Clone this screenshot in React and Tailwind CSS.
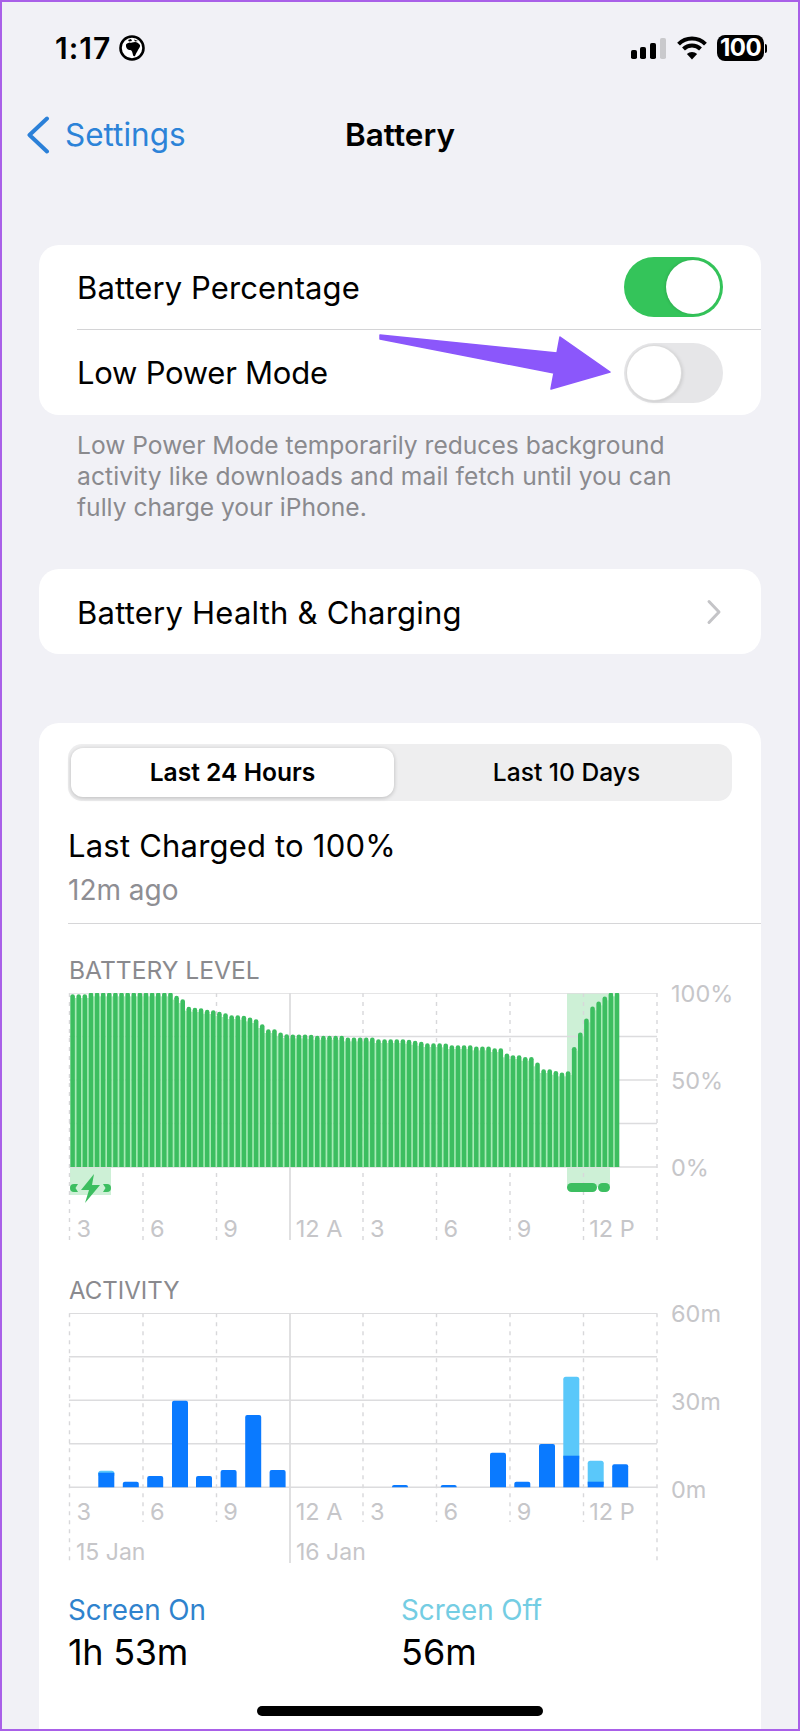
import React from "react";

const LEVEL_TOPS = [135,135,135,130,130,130,130,130,130,130,130,130,130,130,130,130,130,140,150,173,176,177,182,183,188,192,198,198,200,205,210,225,240,240,250,255,256,256,256,257,260,260,260,260,260,265,265,265,265,265,270,270,270,270,270,272,275,278,282,282,282,283,288,288,288,288,292,292,292,297,297,313,318,318,323,323,340,360,360,365,370,366,293,250,208,172,157,142,130,130];

const ACT = [
  { x: 98.3, dark: 1472.7, light: 1470.7 },
  { x: 122.8, dark: 1481.7 },
  { x: 147.2, dark: 1476 },
  { x: 172, dark: 1400.7 },
  { x: 196, dark: 1476 },
  { x: 220.6, dark: 1470 },
  { x: 245.2, dark: 1415 },
  { x: 269.6, dark: 1470 },
  { x: 392, dark: 1485 },
  { x: 440.7, dark: 1485 },
  { x: 490, dark: 1452.7 },
  { x: 514.3, dark: 1481.7 },
  { x: 539, dark: 1444 },
  { x: 563.3, dark: 1455.7, light: 1376.7 },
  { x: 587.7, dark: 1481.7, light: 1460.7 },
  { x: 612.2, dark: 1464.3 },
];

const VX = [69.5, 143, 216.5, 363, 436.5, 510, 583.5, 657];

function GridLines({ top, bottom, minorEnd, longEnd }) {
  const step = (bottom - top) / 4;
  return (
    <g>
      {VX.map((x) => (
        <line key={x} x1={x} x2={x} y1={top} y2={x === 69.5 || x === 657 ? longEnd : minorEnd} stroke="#d8d8da" strokeWidth="1.4" strokeDasharray="4 5" />
      ))}
      <line x1="290" x2="290" y1={top} y2={longEnd} stroke="#d3d3d5" strokeWidth="1.4" />
      {[0, 1, 2, 3, 4].map((i) => (
        <line key={i} x1="69" x2="657" y1={top + step * i} y2={top + step * i} stroke="#dcdcde" strokeWidth="1.4" />
      ))}
    </g>
  );
}

function Toggle({ on }) {
  return (
    <div className={`flex h-[60px] w-[99px] rounded-full p-[3px] ${on ? "justify-end bg-[#34c45a]" : "justify-start bg-[#e6e6e8]"}`}>
      <div className={`h-[54px] w-[54px] rounded-full bg-white ${on ? "shadow-[-1px_0_3px_rgba(0,0,0,0.12)]" : "shadow-[0_0_0_1px_#dcdcdc,1px_1px_4px_rgba(0,0,0,0.18)]"}`} />
    </div>
  );
}

function XLabels() {
  const labels = ["3", "6", "9", "12 A", "3", "6", "9", "12 P"];
  return (
    <div className="ml-[1.5px] flex h-[28px] text-[23.5px] leading-[28px] text-[#c6c6c9]">
      {labels.map((l, i) => (
        <div key={i} className={`w-[73.4px] shrink-0 ${i === 3 || i === 7 ? "pl-[6px]" : "pl-[7px]"}`}>{l}</div>
      ))}
    </div>
  );
}

function YLabels({ items, h }) {
  return (
    <div className={`-mt-[13px] ml-[603px] flex flex-col justify-between text-[23.5px] leading-[28px] text-[#c6c6c9] ${h}`}>
      {items.map((t) => (
        <div key={t}>{t}</div>
      ))}
    </div>
  );
}

export default function App() {
  return (
    <div className="relative box-border flex h-[1731px] w-[800px] flex-col overflow-hidden border-2 border-[#a960e8] bg-[#f1f1f6] font-['Inter','Liberation_Sans',sans-serif] text-black">
      {/* status bar */}
      <div className="flex h-[92px] shrink-0 items-center pl-[53px] pr-[31px]">
        <span className="text-[30px] font-semibold leading-none tracking-[1px]">1:17</span>
        <svg className="ml-[8px]" width="26" height="26" viewBox="0 0 26 26">
          <circle cx="13" cy="13" r="11.5" fill="#fff" stroke="#000" strokeWidth="2.6" />
          <path d="M7 9.5 C9 7 11 8 13 7.5 C15 7 17 6.5 19 8 L21 10 C21.5 12 20 13 19 15 C18 17 17 18.5 16 21 C14.5 22 14 20.5 13.5 18 C13 15.5 12 15 10 15 C8 14.5 6.5 12 7 9.5 Z" fill="#000" />
          <path d="M9 5 L12 4 L13 6 L10 6.5 Z M15 4.5 L19 6 L16 6.5 Z" fill="#000" />
        </svg>
        <div className="ml-auto flex items-center">
          <svg width="36" height="22" viewBox="0 0 36 22" className="mt-[1px]">
            <rect x="0" y="12" width="6" height="9" rx="1.8" fill="#000" />
            <rect x="9" y="9" width="6" height="12" rx="1.8" fill="#000" />
            <rect x="19" y="5" width="6" height="16" rx="1.8" fill="#000" />
            <rect x="29" y="0" width="6" height="21" rx="1.8" fill="#c9c9cc" />
          </svg>
          <svg width="32" height="24" viewBox="0 0 32 24" className="ml-[9px]">
            <path d="M2.56 8.1 A19 19 0 0 1 29.44 8.1" fill="none" stroke="#000" strokeWidth="4" />
            <path d="M7.5 13 A12 12 0 0 1 24.5 13" fill="none" stroke="#000" strokeWidth="4" />
            <path d="M16 23.5 L10.9 18 A7.2 7.2 0 0 1 21.1 18 Z" fill="#000" />
          </svg>
          <div className="ml-[9px] flex h-[26px] w-[47px] items-center justify-center rounded-[8px] bg-black text-[24px] font-bold leading-none tracking-[-0.5px] text-white">100</div>
          <div className="ml-[1px] h-[9px] w-[2px] rounded-r-full bg-black" />
        </div>
      </div>

      {/* nav */}
      <div className="grid h-[82px] shrink-0 grid-cols-[1fr_auto_1fr] items-center">
        <div className="flex items-center pl-[24px]">
          <svg width="24" height="38" viewBox="0 0 24 38">
            <path d="M21 2.5 L3.5 19 L21 35.5" fill="none" stroke="#2b80d8" strokeWidth="4" strokeLinecap="round" strokeLinejoin="round" />
          </svg>
          <span className="ml-[15px] text-[31.5px] leading-none text-[#2c83d8]">Settings</span>
        </div>
        <span className="text-[31.5px] font-semibold leading-none">Battery</span>
        <div />
      </div>

      {/* toggles card */}
      <div className="mx-[37px] mt-[69px] shrink-0 rounded-[20px] bg-white text-[31px]">
        <div className="ml-[38px] flex h-[85px] items-center justify-between border-b border-[#d4d4d6] pr-[38px]">
          <span className="mt-[2px] tracking-[0.1px]">Battery Percentage</span>
          <Toggle on />
        </div>
        <div className="ml-[38px] flex h-[85px] items-center justify-between pr-[38px]">
          <span className="mt-[2px] tracking-[-0.25px]">Low Power Mode</span>
          <Toggle />
        </div>
      </div>

      <p className="ml-[75px] mt-[15px] h-[93px] w-[680px] shrink-0 text-[24.6px] leading-[31px] text-[#8a8a8e]">
        Low Power Mode temporarily reduces background
        <br />
        <span className="tracking-[0.1px]">activity like downloads and mail fetch until you can</span>
        <br />
        fully charge your iPhone.
      </p>

      {/* health card */}
      <div className="mx-[37px] mt-[46px] flex h-[85px] shrink-0 items-center justify-between rounded-[20px] bg-white pl-[38px] pr-[39px] text-[31px]">
        <span className="mt-[3px] tracking-[0.22px]">Battery Health &amp; Charging</span>
        <svg width="16" height="26" viewBox="0 0 16 26">
          <path d="M3 2.5 L13 13 L3 23.5" fill="none" stroke="#c4c4c7" strokeWidth="3" strokeLinecap="round" strokeLinejoin="round" />
        </svg>
      </div>

      {/* usage card */}
      <div className="mx-[37px] mt-[69px] flex-1 rounded-t-[20px] bg-white pl-[29px] pt-[21px]">
        <div className="flex h-[57px] w-[664px] items-center rounded-[14px] bg-[#eeeeef] px-[3px]">
          <div className="flex h-[49px] w-[323px] items-center justify-center rounded-[12px] bg-white text-[24.6px] font-semibold shadow-[0_1px_4px_rgba(0,0,0,0.22)]">Last 24 Hours</div>
          <div className="flex flex-1 items-center justify-center pl-[10px] text-[24.6px] font-medium">Last 10 Days</div>
        </div>
        <div className="mt-[25px] h-[39px] text-[31px] leading-[40px] tracking-[0.2px]">Last Charged to 100%</div>
        <div className="mt-[5px] h-[40px] text-[28px] leading-[40px] text-[#8e8e93]">12m ago</div>
        <div className="mt-[13px] h-px bg-[#d6d6d8]" />

        <div className="ml-[1px] mt-[31px] h-[29px] text-[24.6px] leading-[30px] text-[#8a8a8e]">BATTERY LEVEL</div>
        <div className="relative mt-[9px] h-[250px]">
          <svg className="absolute left-0 top-0" width="693" height="250" viewBox="68 993 693 250">
            <rect x="70" y="1167" width="41" height="28" fill="#cdf0d6" />
            <rect x="567" y="993" width="43" height="194" fill="#cdf0d6" />
            <GridLines top={993} bottom={1167} minorEnd={1240} longEnd={1240} />
            {LEVEL_TOPS.slice(0, -1).map((t, i) => {
              const lower = Math.max(t, LEVEL_TOPS[i + 1]);
              const y = 950 + lower / 3 + 3;
              return <rect key={i} x={70.3 + 6.117 * i + 4.4} y={y} width={1.9} height={1167 - y} fill="#a6ecb5" />;
            })}
            {LEVEL_TOPS.map((t, i) => {
              const y = 950 + t / 3;
              return <path key={i} d={`M${70.3 + 6.117 * i} 1167 V${y + 1.5} a2.3 2.3 0 0 1 4.6 0 V1167 Z`} fill="#3cbe60" />;
            })}
            <rect x="567" y="1183" width="30" height="9" rx="4.5" fill="#3cbe60" />
            <rect x="598" y="1183" width="12" height="9" rx="4.5" fill="#3cbe60" />
            <path d="M70 1188 a4 4 0 0 1 4 -4 h4 l-2.5 4 l2.5 4 h-4 a4 4 0 0 1 -4 -4 Z" fill="#3cbe60" />
            <path d="M111 1188 a4 4 0 0 0 -4 -4 h-4 l2.5 4 l-2.5 4 h4 a4 4 0 0 0 4 -4 Z" fill="#3cbe60" />
            <path d="M94 1174 L81 1190 H89 L85 1203 L100 1185 H92 Z" fill="#3cbe60" />
          </svg>
          <div className="relative flex flex-col">
            <YLabels items={["100%", "50%", "0%"]} h="h-[202px]" />
            <div className="mt-[33px]">
              <XLabels />
            </div>
          </div>
        </div>

        <div className="ml-[1px] mt-[33px] h-[29px] text-[24px] leading-[30px] text-[#8a8a8e]">ACTIVITY</div>
        <div className="relative mt-[8px] h-[253px]">
          <svg className="absolute left-0 top-0" width="693" height="253" viewBox="68 1313 693 253">
            <GridLines top={1313.3} bottom={1487.3} minorEnd={1522} longEnd={1563} />
            {ACT.map((b) => (
              <g key={b.x}>
                {b.light && <path d={`M${b.x} ${b.dark + 3} V${b.light + 2.5} a2.5 2.5 0 0 1 2.5 -2.5 h11 a2.5 2.5 0 0 1 2.5 2.5 V${b.dark + 3} Z`} fill="#5ac8fa" />}
                <path d={b.light ? `M${b.x} 1487.3 V${b.dark} h16 V1487.3 Z` : `M${b.x} 1487.3 V${b.dark + 2} a2 2 0 0 1 2 -2 h12 a2 2 0 0 1 2 2 V1487.3 Z`} fill="#0a7aff" />
              </g>
            ))}
          </svg>
          <div className="relative flex flex-col">
            <YLabels items={["60m", "30m", "0m"]} h="h-[204px]" />
            <div className="mt-[-6px]">
              <XLabels />
            </div>
            <div className="ml-[8px] mt-[12px] flex h-[28px] text-[23px] leading-[28px] text-[#c6c6c9]">
              <div className="w-[220px]">15 Jan</div>
              <div>16 Jan</div>
            </div>
          </div>
        </div>

        <div className="mt-[26px] flex">
          <div className="w-[333px]">
            <div className="h-[36px] text-[27.8px] leading-[36px] text-[#2f83cd]">Screen On</div>
            <div className="mt-[4px] h-[40px] text-[36px] leading-[40px] tracking-[-0.3px]">1h 53m</div>
          </div>
          <div>
            <div className="h-[36px] text-[27.8px] leading-[36px] text-[#74cde3]">Screen Off</div>
            <div className="mt-[4px] h-[40px] text-[36px] leading-[40px]">56m</div>
          </div>
        </div>
      </div>

      {/* arrow overlay */}
      <svg className="absolute left-[376px] top-[331px]" width="240" height="62" viewBox="378 333 240 62">
        <path d="M380 335 L557 353 L560 337 L610 372 L551 389 L554 373 L380 339 Z" fill="#8b57fb" stroke="#8b57fb" strokeWidth="1.5" strokeLinejoin="round" />
      </svg>

      {/* home indicator */}
      <div className="absolute bottom-[13px] left-[255px] h-[10px] w-[286px] rounded-full bg-black" />
    </div>
  );
}
